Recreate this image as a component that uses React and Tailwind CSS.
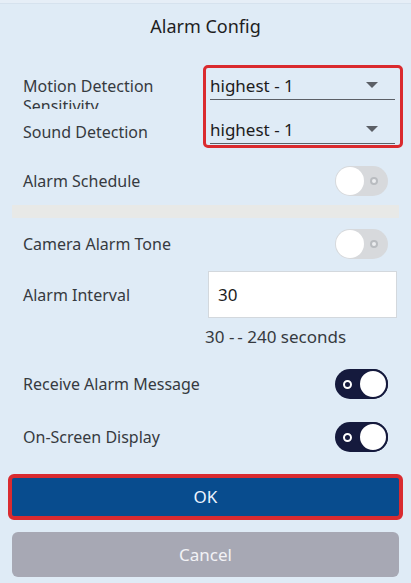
import React from "react";

function ToggleOff() {
  return (
    <div className="relative w-[53px] h-[30px] rounded-full bg-[#d7d9dc] shrink-0">
      <div className="absolute left-[1px] top-[1px] w-[28px] h-[28px] rounded-full bg-white" />
      <div className="absolute left-[35px] top-[11px] w-[8px] h-[8px] rounded-full border-[2px] border-[#b9bcc0] bg-[#eceef0]" />
    </div>
  );
}

function ToggleOn() {
  return (
    <div className="relative w-[53px] h-[30px] rounded-full bg-[#151a3d] shrink-0">
      <div className="absolute left-[8px] top-[11px] w-[9px] h-[9px] rounded-full border-[2px] border-white" />
      <div className="absolute right-0 top-0 w-[30px] h-[30px] rounded-full bg-white border-[2px] border-[#151a3d]" />
    </div>
  );
}

function Select() {
  return (
    <div className="h-[32px] border-b border-[#5b5f66] flex items-end justify-between pb-[2px]">
      <span className="text-[17px] leading-[22px] text-[#1c1c1c]">highest - 1</span>
      <svg width="12" height="7" viewBox="0 0 12 7" className="mr-[17px] mb-[8px]">
        <polygon points="0,0 12,0 6,6" fill="#5b5f66" />
      </svg>
    </div>
  );
}

export default function App() {
  return (
    <div
      className="w-[411px] h-[583px] bg-[#dfebf6] overflow-hidden flex flex-col text-[#363a40]"
      style={{ fontFamily: "'Noto Sans', 'Open Sans', sans-serif" }}
    >
      <div className="h-[4px] bg-[#e6eef7] border-b border-[#d6e2ee]" />
      <div className="mt-[10px] text-center text-[18px] leading-[25px] text-[#1e1e1e]">Alarm Config</div>

      <div className="mt-[26px] flex items-start">
        <div className="w-[203px] pl-[23px] flex flex-col text-[16px]">
          <div className="mt-[11px] h-[33px] overflow-hidden leading-[20px] pr-[20px]">
            Motion Detection Sensitivity
          </div>
          <div className="mt-[12px] leading-[22px]">Sound Detection</div>
        </div>
        <div className="w-[200px] border-[3px] border-[#da2a2e] rounded-[5px] pl-[4px] pr-[5px] pb-[1px]">
          <Select />
          <div className="mt-[12px]">
            <Select />
          </div>
        </div>
      </div>

      <div className="mt-[18px] flex items-center justify-between pl-[23px] pr-[23px] h-[30px]">
        <span className="text-[16px]">Alarm Schedule</span>
        <ToggleOff />
      </div>

      <div className="mt-[9px] mx-[12px] h-[13px] bg-[#e8e9e7]" />

      <div className="mt-[11px] flex items-center justify-between pl-[23px] pr-[23px] h-[30px]">
        <span className="text-[16px]">Camera Alarm Tone</span>
        <ToggleOff />
      </div>

      <div className="mt-[12px] flex items-center pl-[23px] pr-[14px] h-[47px]">
        <span className="text-[16px] w-[185px]">Alarm Interval</span>
        <div className="flex-1 h-[47px] bg-white border border-[#d3d8dd] flex items-center pl-[9px] text-[17px] text-[#1c1c1c]">
          30
        </div>
      </div>

      <div className="mt-[8px] pl-[205px] text-[17px] leading-[22px] whitespace-nowrap">
        30 <span className="mr-[3px]">-</span>- 240 seconds
      </div>

      <div className="mt-[21px] flex items-center justify-between pl-[23px] pr-[23px] h-[30px]">
        <span className="text-[16px]">Receive Alarm Message</span>
        <ToggleOn />
      </div>

      <div className="mt-[23px] flex items-center justify-between pl-[23px] pr-[23px] h-[30px]">
        <span className="text-[16px]">On-Screen Display</span>
        <ToggleOn />
      </div>

      <div className="mt-[22px] mx-[8px] h-[46px] border-[4px] border-[#d92b30] rounded-[6px] bg-[#084c8e] flex items-center justify-center text-[17px] text-[#eef4ff]">
        OK
      </div>

      <div className="mt-[12px] ml-[12px] mr-[12px] h-[45px] rounded-[6px] bg-[#a7a8b4] flex items-center justify-center text-[17px] text-[#f2f2f6]">
        Cancel
      </div>
    </div>
  );
}
